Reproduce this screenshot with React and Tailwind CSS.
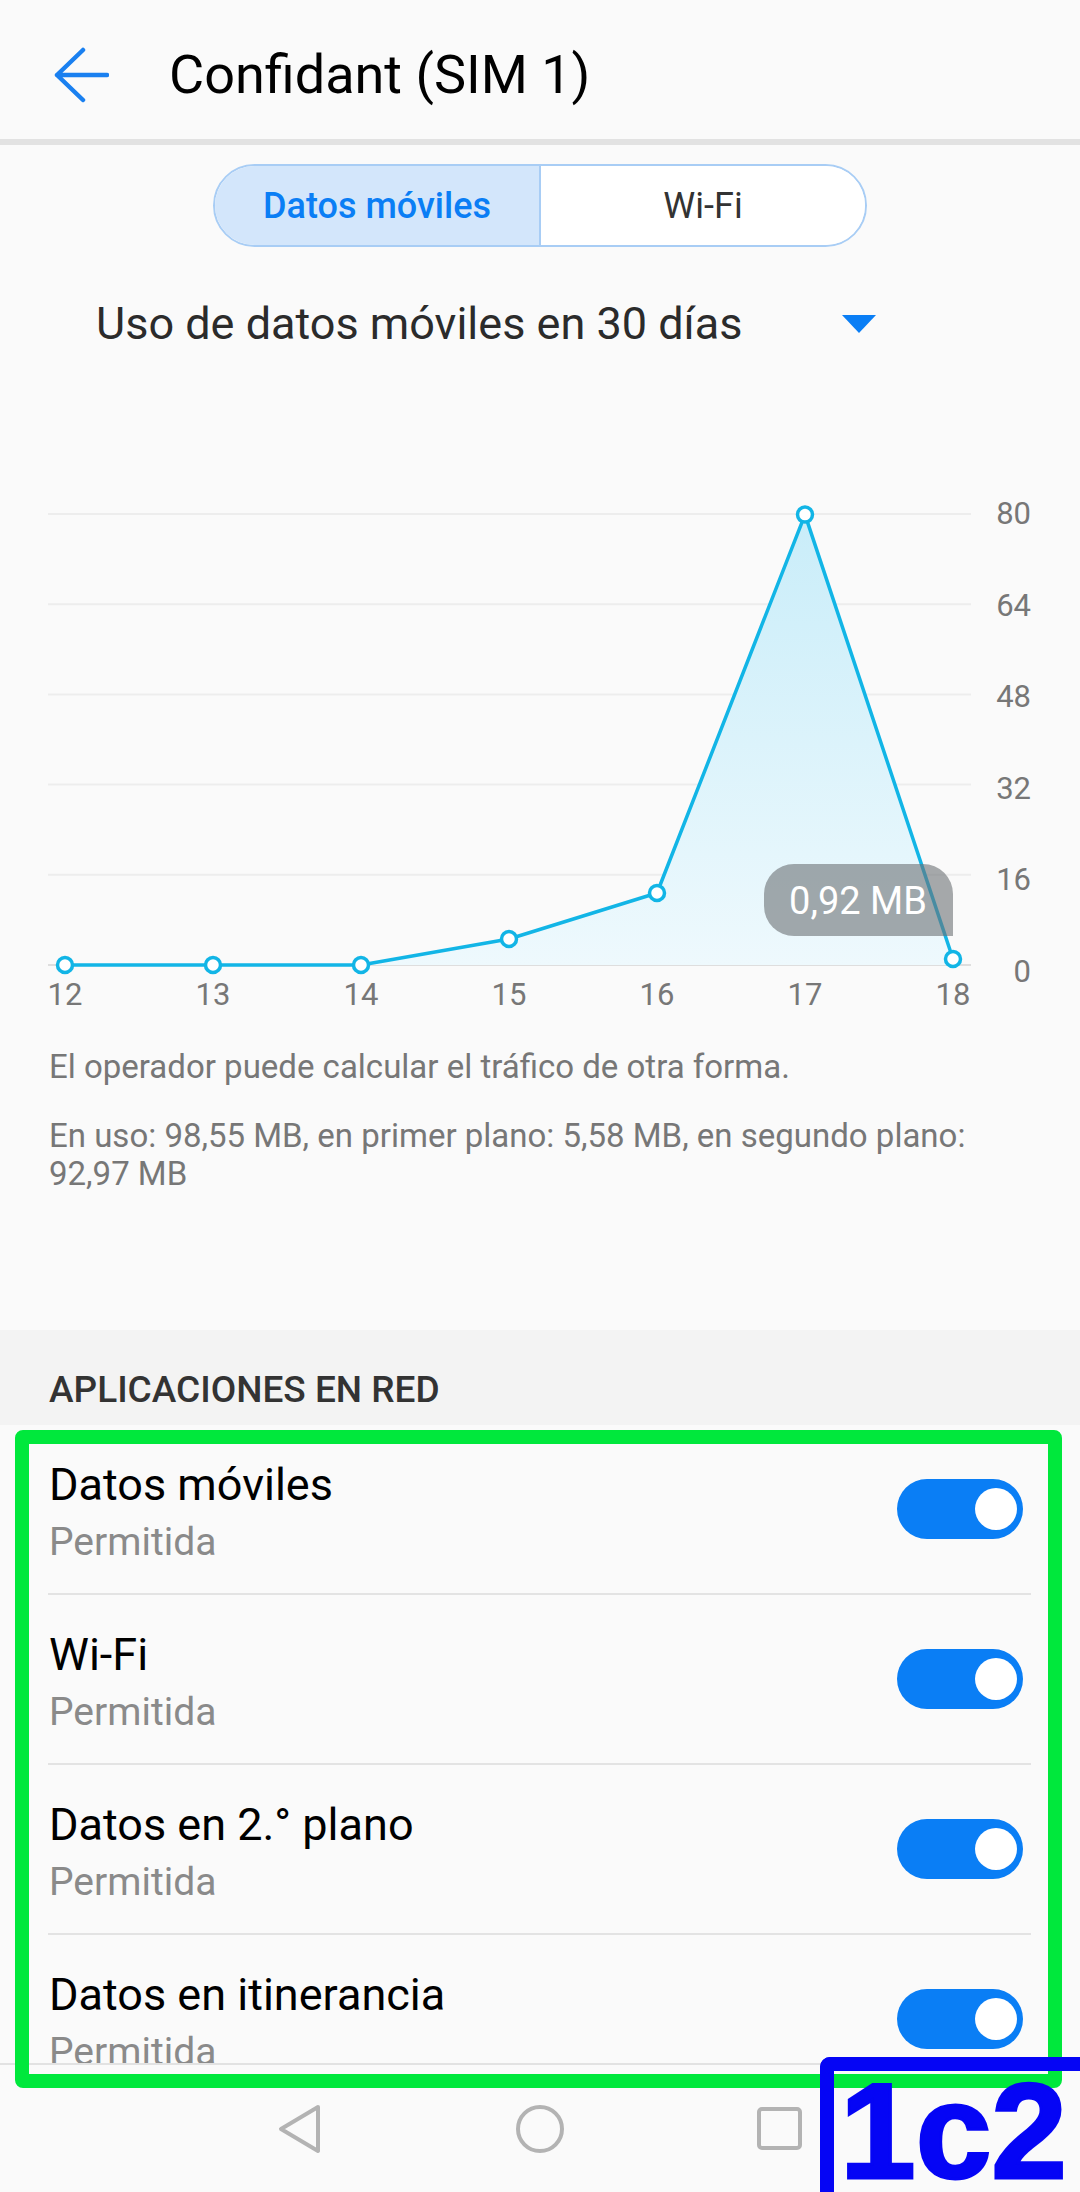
import React from 'react'

const POINTS = [[65, 965], [213, 965], [361, 965], [509, 939], [657, 893], [805, 514.6], [953, 959]]
const GRID = [514, 604.2, 694.4, 784.6, 874.8, 965]
const Y_LABELS = ['80', '64', '48', '32', '16', '0']
const X_LABELS = ['12', '13', '14', '15', '16', '17', '18']
const ROWS = ['Datos móviles', 'Wi-Fi', 'Datos en 2.° plano', 'Datos en itinerancia']

function UsageChart() {
  const line = POINTS.map(p => p.join(',')).join(' ')
  const area = `${POINTS[0][0]},965 ${line} ${POINTS[6][0]},965`

  return (
    <svg width="1080" height="666" viewBox="0 354 1080 666" className="block shrink-0">
      <defs>
        <linearGradient id="usageFill" x1="0" y1="514" x2="0" y2="965" gradientUnits="userSpaceOnUse">
          <stop offset="0" stopColor="#c9edf9" />
          <stop offset="1" stopColor="#eef9fd" />
        </linearGradient>
      </defs>

      {GRID.map((y, i) => (
        <line key={y} x1="48" x2="971" y1={y} y2={y} stroke={i === 5 ? '#dedede' : '#ededed'} strokeWidth="2" />
      ))}

      <polygon points={area} fill="url(#usageFill)" />
      <polyline points={line} fill="none" stroke="#12b5e6" strokeWidth="3.5" strokeLinejoin="round" />

      {/* tooltip */}
      <path
        d="M794 864 H923 A30 30 0 0 1 953 894 V936 H794 A30 30 0 0 1 764 906 V894 A30 30 0 0 1 794 864 Z"
        fill="rgba(108,113,116,0.6)"
      />
      <text x="858" y="914" textAnchor="middle" fontSize="38" fill="#ffffff">0,92 MB</text>

      {POINTS.map(([x, y]) => (
        <circle key={x} cx={x} cy={y} r="7.5" fill="#ffffff" stroke="#12b5e6" strokeWidth="3.5" />
      ))}

      {Y_LABELS.map((label, i) => (
        <text key={label} x="1031" y={524 + i * 91.5} textAnchor="end" fontSize="31" fill="#777777">{label}</text>
      ))}
      {X_LABELS.map((label, i) => (
        <text key={label} x={POINTS[i][0]} y="1005" textAnchor="middle" fontSize="31" fill="#777777">{label}</text>
      ))}
    </svg>
  )
}

function Toggle() {
  return (
    <div className="w-[126px] h-[60px] mr-[8px] shrink-0 rounded-full bg-[#0a7ef5] flex items-center justify-end pr-[6px]">
      <div className="w-[42px] h-[42px] rounded-full bg-white" />
    </div>
  )
}

export default function App() {
  return (
    <div className="relative w-[1080px] h-[2192px] overflow-hidden bg-[#fafafa] font-['Roboto','Noto_Sans',sans-serif] flex flex-col">
      <div className="flex-1 min-h-0 overflow-hidden flex flex-col">
        {/* Header */}
        <div className="h-[139px] shrink-0 flex items-center pt-[10px]">
          <svg className="ml-[45px]" width="64" height="64" viewBox="0 0 64 64" fill="none" stroke="#1a80f0" strokeWidth="4.5" strokeLinecap="round" strokeLinejoin="round">
            <path d="M12 32H62M38 7L12 32L38 57" />
          </svg>
          <h1 className="ml-[60px] text-[54px] leading-[64px] text-black">Confidant (SIM 1)</h1>
        </div>
        <div className="h-[6px] shrink-0 bg-[#e2e2e2]" />

        {/* Segmented control */}
        <div className="mt-[19px] mx-auto w-[654px] h-[83px] shrink-0 rounded-full border-2 border-[#a8cdf5] overflow-hidden flex">
          <div className="w-[326px] bg-[#d3e6fb] border-r-2 border-[#a8cdf5] flex items-center justify-center text-[36px] font-medium text-[#0a7ef5]">
            Datos móviles
          </div>
          <div className="flex-1 bg-white flex items-center justify-center text-[36px] text-[#333333]">Wi-Fi</div>
        </div>

        {/* Period selector */}
        <div className="mt-[47px] h-[60px] shrink-0 flex items-center pl-[96px]">
          <span className="text-[45px] leading-[60px] text-[#2b2b2b]">Uso de datos móviles en 30 días</span>
          <svg className="ml-auto mr-[204px]" width="34" height="18" viewBox="0 0 34 18">
            <polygon points="0,0 34,0 17,18" fill="#0a7ef5" />
          </svg>
        </div>

        <UsageChart />

        <div className="mt-[28px] px-[49px] shrink-0 text-[33px] leading-[38px] text-[#777777]">
          <p>El operador puede calcular el tráfico de otra forma.</p>
          <p className="mt-[31px]">
            En uso: 98,55 MB, en primer plano: 5,58 MB, en segundo plano:<br />92,97 MB
          </p>
        </div>

        {/* Network apps */}
        <div className="mt-[137px] h-[95px] shrink-0 bg-[#f3f3f3] pt-[38px] px-[49px]">
          <h2 className="text-[37px] leading-[44px] font-medium text-[#333333]">APLICACIONES EN RED</h2>
        </div>

        <div className="ml-[48px] mr-[49px] shrink-0">
          {ROWS.map(title => (
            <div key={title} className="h-[170px] border-b-2 border-[#e3e3e3] flex justify-between items-center">
              <div className="self-start pt-[34px] pl-[1px]">
                <div className="text-[45px] leading-[52px] text-black">{title}</div>
                <div className="mt-[8px] text-[39px] leading-[46px] text-[#8a8a8a]">Permitida</div>
              </div>
              <Toggle />
            </div>
          ))}
        </div>
      </div>

      {/* Navigation bar */}
      <div className="h-[129px] shrink-0 border-t-2 border-[#e2e2e2] bg-[#fafafa] flex items-center justify-center gap-[192px]">
        <svg width="48" height="52" viewBox="0 0 48 52" fill="none" stroke="#b3b3b3" strokeWidth="4" strokeLinejoin="round">
          <polygon points="42,4 5,26 42,48" />
        </svg>
        <svg width="48" height="52" viewBox="0 0 48 52" fill="none" stroke="#b3b3b3" strokeWidth="4">
          <circle cx="24" cy="26" r="22" />
        </svg>
        <svg width="48" height="52" viewBox="0 0 48 52" fill="none" stroke="#b3b3b3" strokeWidth="4">
          <rect x="3" y="6" width="41" height="39" rx="3" />
        </svg>
      </div>

      {/* Annotation overlays */}
      <div className="absolute left-[15px] top-[1430px] w-[1047px] h-[658px] border-[14px] border-[#00e83c] rounded-[8px] pointer-events-none" />
      <div className="absolute left-[820px] top-[2057px] w-[300px] h-[200px] border-l-[14px] border-t-[14px] border-[#0505f5] rounded-tl-[10px] pointer-events-none" />
      <div className="absolute left-[840px] top-[2063px] text-[136px] leading-none font-bold text-[#0505f5] [-webkit-text-stroke:3px_#0505f5] font-['Liberation_Sans',Arial,sans-serif]">
        1c2
      </div>
    </div>
  )
}
